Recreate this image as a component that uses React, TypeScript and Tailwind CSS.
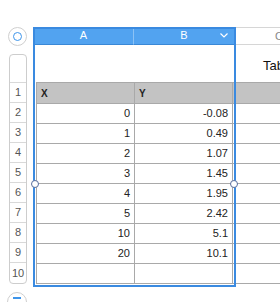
import React from "react";

const rows: [string, string][] = [
  ["0", "-0.08"],
  ["1", "0.49"],
  ["2", "1.07"],
  ["3", "1.45"],
  ["4", "1.95"],
  ["5", "2.42"],
  ["10", "5.1"],
  ["20", "10.1"],
  ["", ""],
];

function Handle({ className }: { className: string }) {
  return (
    <div
      className={`absolute h-[8px] w-[8px] rounded-full border border-[#5a6f9e] bg-white ${className}`}
    />
  );
}

export default function App() {
  return (
    <div className="relative h-[302px] w-[280px] overflow-hidden bg-white font-['Liberation_Sans',Arial,sans-serif] text-[11px] text-[#222]">
      {/* column header strip */}
      <div className="mt-[27px] flex h-[18px]">
        <div className="flex w-[34px] shrink-0 items-center justify-center">
          <div className="flex h-[19px] w-[19px] items-center justify-center rounded-full border border-[#cfcfcf] bg-white">
            <div className="h-[9px] w-[9px] rounded-full border-[1.5px] border-[#3e95ea]" />
          </div>
        </div>
        <div className="flex w-[100px] items-center justify-center border-b border-r border-[#3a88d6] border-r-[#8cc2f5] bg-[#52a3f0] text-[11px] text-white">
          A
        </div>
        <div className="relative flex w-[100px] items-center justify-center border-b border-[#3a88d6] bg-[#52a3f0] text-[11px] text-white">
          B
          <svg
            className="absolute right-[6px] top-[6px]"
            width="8"
            height="5"
            viewBox="0 0 8 5"
          >
            <path d="M0.5 0.5 L4 4 L7.5 0.5" fill="none" stroke="white" strokeWidth="1.2" />
          </svg>
        </div>
        <div className="ml-[1px] flex flex-1 items-center justify-end border-y border-l border-[#d6d6d6] pr-0 text-[11px] text-[#888]">
          <span className="-mr-[3px]">C</span>
        </div>
      </div>

      {/* body */}
      <div className="flex">
        <div className="w-[34px] shrink-0 pl-[9px] pt-[9px]">
          <div className="w-[18px] overflow-hidden rounded-[4px] border border-[#cdcdcd] text-[11px] text-[#555]">
            <div className="h-[28px] border-b border-[#d9d9d9]" />
            {Array.from({ length: 10 }, (_, i) => (
              <div
                key={i}
                className="flex h-[20px] items-center justify-center border-b border-[#d9d9d9] last:border-b-0"
              >
                {i + 1}
              </div>
            ))}
          </div>
        </div>

        <div className="flex flex-1 flex-col">
          <div className="flex h-[37px] items-center pl-[229px] pt-[4px] text-[13px] text-[#111]">
            <span className="whitespace-nowrap">Table 1</span>
          </div>
          <div className="ml-[2px] border-l border-t border-[#a9a9a9]">
            <div className="flex h-[21px] bg-[#c3c3c3]">
              <div className="flex w-[98px] items-center border-b border-r border-[#a9a9a9] pl-[4px] text-[10px] font-bold">
                X
              </div>
              <div className="flex w-[98px] items-center border-b border-r border-[#a9a9a9] pl-[4px] text-[10px] font-bold">
                Y
              </div>
              <div className="flex-1 border-b border-[#a9a9a9]" />
            </div>
            {rows.map(([x, y], i) => (
              <div key={i} className="flex h-[20px]">
                <div className="flex w-[98px] items-center justify-end border-b border-r border-[#a9a9a9] pr-[4px]">
                  {x}
                </div>
                <div className="flex w-[98px] items-center justify-end border-b border-r border-[#a9a9a9] pr-[4px]">
                  {y}
                </div>
                <div className="flex-1 border-b border-[#a9a9a9]" />
              </div>
            ))}
          </div>
        </div>
      </div>

      {/* selection outline */}
      <div className="pointer-events-none absolute left-[33px] top-[27px] h-[260px] w-[203px] border-2 border-[#3a8ae0]" />
      <Handle className="left-[31px] top-[180px]" />
      <Handle className="left-[230px] top-[180px]" />

      {/* add-row button, cut off at the bottom */}
      <div className="absolute left-[7px] top-[292px] flex h-[20px] w-[20px] justify-center rounded-full border border-[#cfcfcf] bg-white">
        <div className="mt-[4px] h-[1.5px] w-[8px] bg-[#3e95ea]" />
      </div>
    </div>
  );
}
